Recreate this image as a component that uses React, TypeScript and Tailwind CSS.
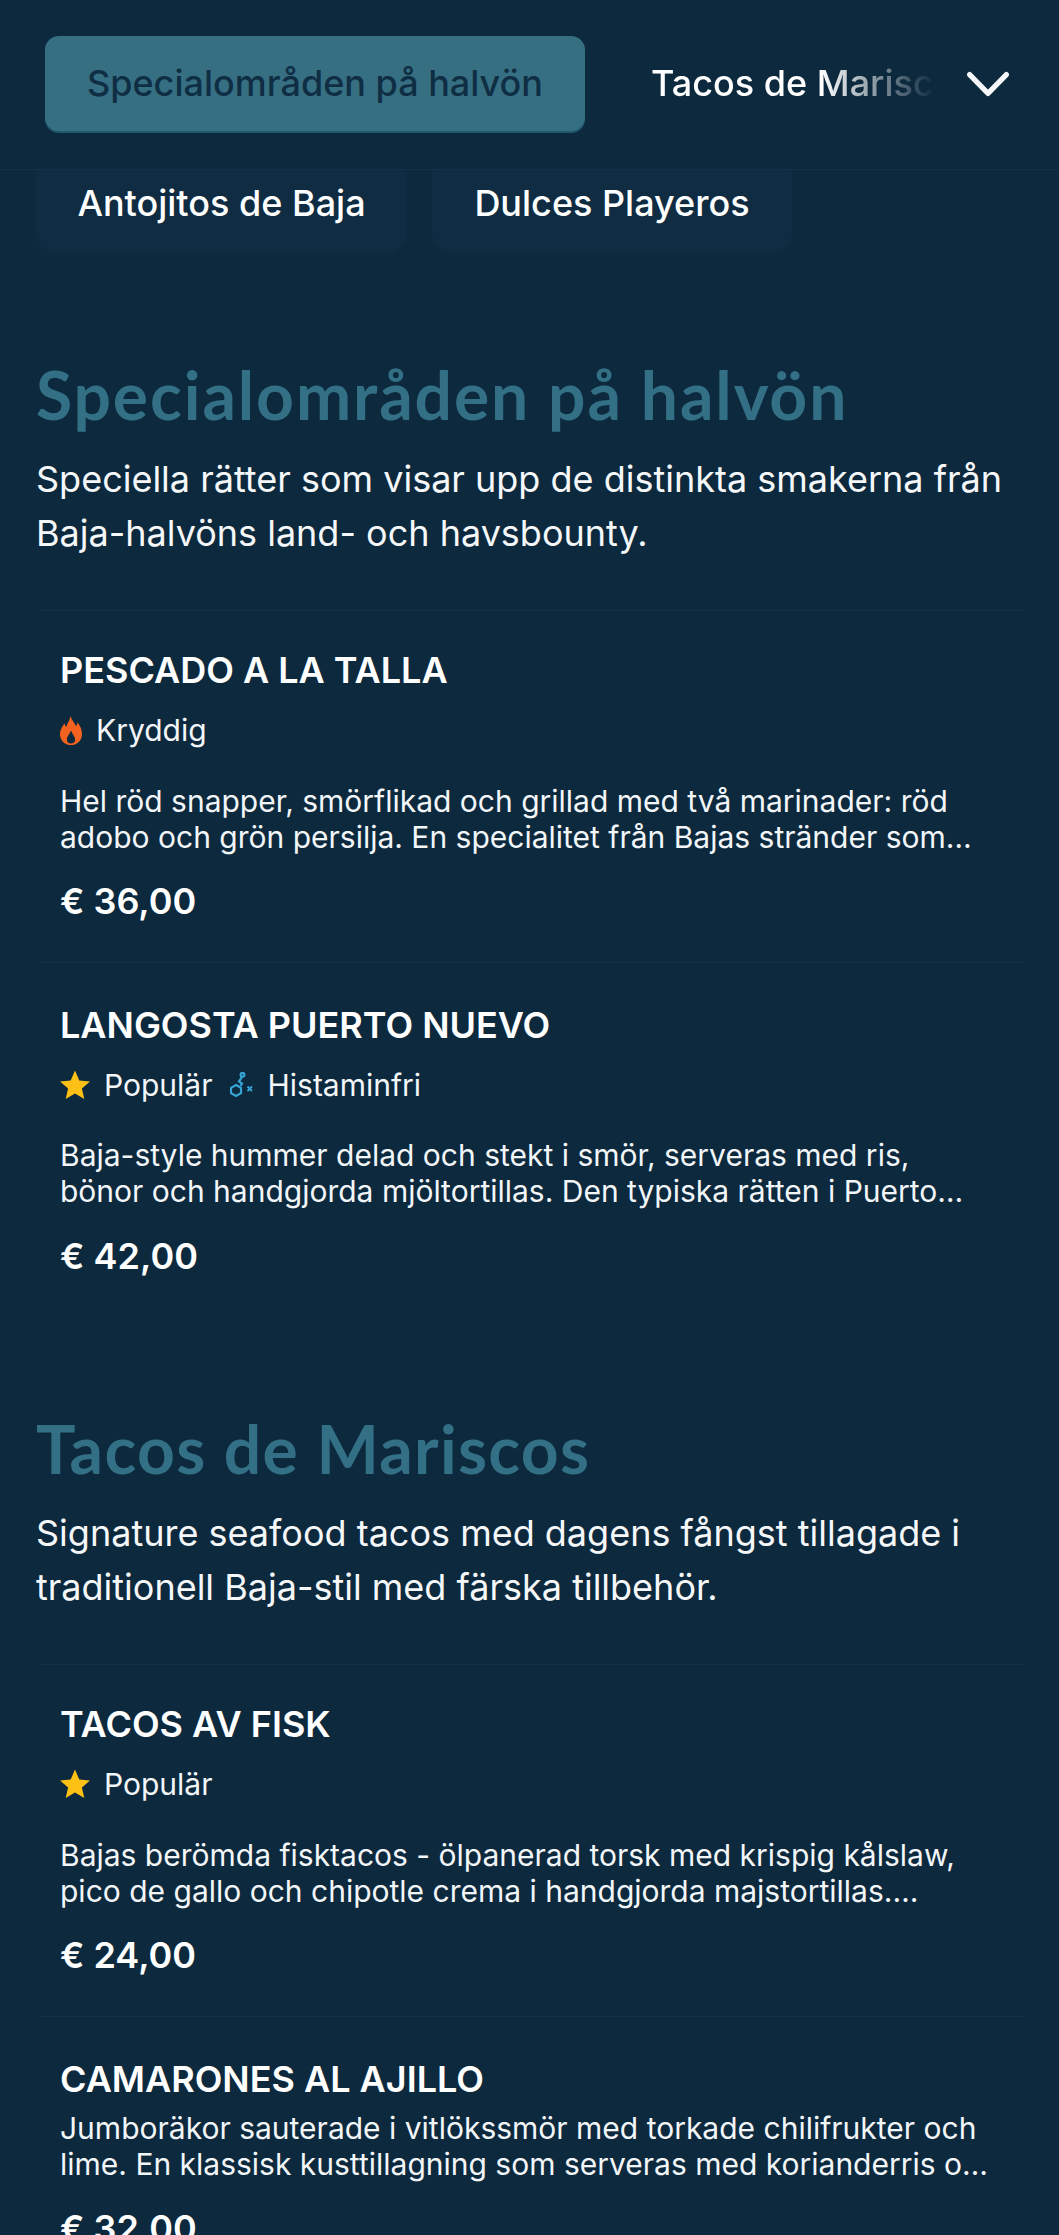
import React from "react";

const inter = "[font-family:Inter,'Liberation_Sans',sans-serif]";

function Flame() {
  return (
    <svg viewBox="0 0 24 30" className="h-[29px] w-[22px] shrink-0" fill="#f4621f" preserveAspectRatio="none">
      <path
        fillRule="evenodd"
        d="M11.500 0C12.500 4 15.500 6.500 17.500 10.500C18.500 9.500 19 8 19 6.500C22 10 24 14 24 18.500C24 25 19 30 12 30C5 30 0 25 0 18.500C0 14 2.500 11 5 7.500C5.200 9 5.800 10.500 6.800 11.500C8 7 11 4 11.500 0ZM12 15C10.500 19 7.500 21 7.500 24.500C7.500 27 9.500 28.500 12 28.500C14.500 28.500 16.500 27 16.500 24.500C16.500 21 13.500 19 12 15Z"
      />
    </svg>
  );
}

function Star() {
  return (
    <svg viewBox="0 0 30 30" className="h-[30px] w-[30px] shrink-0" fill="#fdc014">
      <path d="M15 .5l4.300 10 10.700.9-8.100 7.100 2.400 10.500L15 23.400 5.700 29l2.400-10.500L0 11.400l10.700-.9L15 .5Z" />
    </svg>
  );
}

function Molecule() {
  return (
    <svg viewBox="0 0 24 26" className="h-[26px] w-[24px] shrink-0" fill="none" stroke="#36a5d6" strokeWidth="2.200">
      <circle cx="12.500" cy="2.800" r="1.900" />
      <path d="M12 4.800 9 9.500l3 2-1.500 2.500" />
      <path d="M6 13l5 2.900v5.200L6 24l-5-2.900v-5.200L6 13Z" />
      <path d="M17.500 14.500l4.500 4.500M22 14.500 17.500 19" strokeWidth="1.800" />
    </svg>
  );
}

type Tag = { icon: React.ReactNode; label: string };

function Item({
  name,
  tags,
  desc,
  price,
  top,
  descTop,
  priceTop,
  bottom,
}: {
  name: string;
  tags?: Tag[];
  desc: string;
  price: string;
  top: string;
  descTop: string;
  priceTop: string;
  bottom?: string;
}) {
  return (
    <div className={`mx-[4px] border-t border-[#11304a] px-[20px] ${top} ${bottom ?? ""}`}>
      <h3 className="text-[36px] leading-[44px] font-semibold uppercase text-white">{name}</h3>
      {tags && (
        <div className="mt-[18px] flex h-[40px] items-center">
          {tags.map((t, i) => (
            <div key={t.label} className={`flex items-center gap-[14px] ${i > 0 ? "ml-[17px]" : ""}`}>
              {t.icon}
              <span className="text-[30px] leading-[40px] text-[#f3f6f8]">{t.label}</span>
            </div>
          ))}
        </div>
      )}
      <p className={`line-clamp-2 pr-[5px] text-[30px] leading-[36px] text-[#f3f6f8] ${descTop}`}>{desc}</p>
      <div className={`text-[36px] leading-[44px] font-semibold text-white ${priceTop}`}>{price}</div>
    </div>
  );
}

function Section({ title, desc, mt, tracking, children }: { title: string; desc: string; mt: string; tracking: string; children: React.ReactNode }) {
  return (
    <section className={mt}>
      <h2 className={`text-[66px] leading-[62px] font-bold text-[#337085] [font-family:Lato,sans-serif] ${tracking}`}>{title}</h2>
      <p className="mt-[26px] text-[36px] leading-[54px] text-[#f5f7f9]">{desc}</p>
      <div className="mt-[50px]">{children}</div>
    </section>
  );
}

export default function App() {
  return (
    <div className={`relative h-[2235px] w-[1059px] overflow-hidden bg-[#0c293e] ${inter}`}>
      <header className="absolute inset-x-0 top-0 z-10 flex h-[170px] items-start border-b border-[#11304a] bg-[#0c293e] pl-[45px]">
        <button className="mt-[36px] flex h-[95px] w-[540px] shrink-0 items-center justify-center rounded-[14px] bg-[#366f82] pb-[2px] text-[36px] font-medium text-[#0f2e44] shadow-[0_2px_0_#1f5a6d]">
          Specialområden på halvön
        </button>
        <div className="ml-[66px] mt-[36px] flex h-[95px] w-[284px] items-center overflow-hidden whitespace-nowrap pb-[2px] text-[36px] font-medium text-white [mask-image:linear-gradient(to_right,#000_60%,transparent_100%)]">
          Tacos de Mariscos
        </div>
        <svg viewBox="0 0 40 24" className="ml-[32px] mt-[71px] h-[26px] w-[42px]" fill="none" stroke="#f5f7f9" strokeWidth="5" strokeLinecap="round" strokeLinejoin="round">
          <path d="M2.500 3 20 21 37.500 3" />
        </svg>
      </header>

      <main className="pl-[36px] pr-[32px] pt-[153px]">
        <div className="flex gap-[25px]">
          <div className="flex h-[100px] w-[371px] items-center justify-center rounded-[20px] bg-[#102c42] text-[36px] font-medium text-white">Antojitos de Baja</div>
          <div className="flex h-[100px] w-[360px] items-center justify-center rounded-[20px] bg-[#102c42] text-[36px] font-medium text-white">Dulces Playeros</div>
        </div>

        <Section
          mt="mt-[111px]"
          tracking="tracking-[1.9px]"
          title="Specialområden på halvön"
          desc="Speciella rätter som visar upp de distinkta smakerna från Baja-halvöns land- och havsbounty."
        >
          <Item
            top="pt-[37px]"
            descTop="mt-[33px]"
            priceTop="mt-[24px]"
            name="Pescado a la Talla"
            tags={[{ icon: <Flame />, label: "Kryddig" }]}
            desc="Hel röd snapper, smörflikad och grillad med två marinader: röd adobo och grön persilja. En specialitet från Bajas stränder som serveras hel med tillbehör och färska tortillas."
            price="€ 36,00"
            bottom="pb-[39px]"
          />
          <Item
            top="pt-[40px]"
            descTop="mt-[32px]"
            priceTop="mt-[25px]"
            name="Langosta Puerto Nuevo"
            tags={[
              { icon: <Star />, label: "Populär" },
              { icon: <Molecule />, label: "Histaminfri" },
            ]}
            desc="Baja-style hummer delad och stekt i smör, serveras med ris, bönor och handgjorda mjöltortillas. Den typiska rätten i Puerto Nuevo sedan femtiotalet vid kusten."
            price="€ 42,00"
          />
        </Section>

        <Section
          mt="mt-[140px]"
          tracking="tracking-[1.3px]"
          title="Tacos de Mariscos"
          desc="Signature seafood tacos med dagens fångst tillagade i traditionell Baja-stil med färska tillbehör."
        >
          <Item
            top="pt-[37px]"
            descTop="mt-[33px]"
            priceTop="mt-[24px]"
            name="Tacos av Fisk"
            tags={[{ icon: <Star />, label: "Populär" }]}
            desc="Bajas berömda fisktacos - ölpanerad torsk med krispig kålslaw, pico de gallo och chipotle crema i handgjorda majstortillas. Serveras med lime och salsa."
            price="€ 24,00"
            bottom="pb-[39px]"
          />
          <Item
            top="pt-[40px]"
            descTop="mt-[9px]"
            priceTop="mt-[24px]"
            name="Camarones al Ajillo"
            desc="Jumboräkor sauterade i vitlökssmör med torkade chilifrukter och lime. En klassisk kusttillagning som serveras med korianderris och färska grönsaker."
            price="€ 32,00"
          />
        </Section>
      </main>
    </div>
  );
}
